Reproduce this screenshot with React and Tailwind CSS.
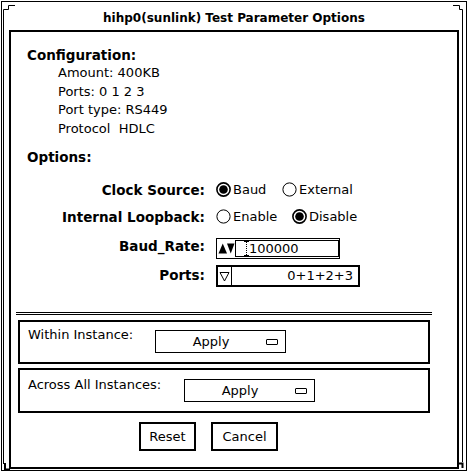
import React from 'react';

function Radio({ on }) {
  return (
    <svg width="15" height="15" viewBox="0 0 15 15" className="shrink-0">
      <circle cx="7.5" cy="7.5" r="6.6" fill="white" stroke="black" strokeWidth={on ? 1.6 : 1} />
      {on && <circle cx="7.5" cy="7.5" r="4.3" fill="black" />}
    </svg>
  );
}

function Spinner() {
  return (
    <svg width="17" height="11" viewBox="0 0 17 11" className="shrink-0">
      <polygon points="0.5,10.5 9,10.5 4.75,0.5" fill="black" />
      <polygon points="9,0.5 16.5,0.5 12.75,10.5" fill="black" />
    </svg>
  );
}

function Caret() {
  return (
    <svg width="5" height="15" viewBox="0 0 5 15" className="shrink-0">
      <path d="M0 0.5H5M0 14.5H5" stroke="black" strokeWidth="1" />
      <path d="M2.5 1V14" stroke="black" strokeWidth="1" strokeDasharray="1 1" />
    </svg>
  );
}

function MenuButton({ label }) {
  return (
    <div className="flex h-[23px] w-[131px] items-center border border-black">
      <span className="w-[110px] text-center text-[13px] leading-[16px]">{label}</span>
      <span className="h-[6px] w-[12px] rounded-[1px] border border-black" />
    </div>
  );
}

function FrameMarks() {
  // window-frame decorations (resize corners and inner rails)
  return (
    <svg
      width="468"
      height="476"
      viewBox="0 0 468 476"
      className="pointer-events-none absolute left-0 top-0"
      fill="none"
      stroke="black"
      strokeWidth="1"
    >
      <path d="M15 5.5H8.5V9.5H3.5V464" />
      <path d="M453 5.5H459.5V9.5H462.5V462" />
      <path d="M5 463V469.5H10" strokeWidth="2" />
      <path d="M458 463.5H462.5V468" strokeWidth="2" />
    </svg>
  );
}

export default function App() {
  return (
    <div className="relative h-[476px] w-[468px] overflow-hidden bg-white font-['DejaVu_Sans',sans-serif] text-black">
      <div className="ml-[1px] mt-[1px] h-[470px] w-[466px] border border-black">
        <div className="h-[28px] pt-[9px] text-center text-[12px] font-bold leading-[14px]">
          hihp0(sunlink) Test Parameter Options
        </div>

        <div className="ml-[7px] h-[439px] w-[450px] border-2 border-black">
          <div className="mt-[14px] pl-[16px]">
            <div className="text-[13.5px] font-bold leading-[18px]">Configuration:</div>
            <div className="pl-[31px] text-[13px] leading-[18.5px]">
              <div>Amount: 400KB</div>
              <div>Ports: 0 1 2 3</div>
              <div>Port type: RS449</div>
              <div>Protocol&nbsp; HDLC</div>
            </div>
            <div className="mt-[10px] text-[13.5px] font-bold leading-[18px]">Options:</div>
          </div>

          <div className="mt-[13px] flex h-[21px] items-center">
            <div className="w-[194px] text-right text-[13.5px] font-bold leading-[18px]">Clock Source:</div>
            <div className="ml-[11px] flex items-center text-[13px]">
              <Radio on />
              <span className="ml-[2px] w-[49px]">Baud</span>
              <Radio />
              <span className="ml-[2px]">External</span>
            </div>
          </div>

          <div className="mt-[6px] flex h-[21px] items-center">
            <div className="w-[194px] text-right text-[13.5px] font-bold leading-[18px]">Internal Loopback:</div>
            <div className="ml-[11px] flex items-center text-[13px]">
              <Radio />
              <span className="ml-[2px] w-[59px]">Enable</span>
              <Radio on />
              <span className="ml-[2px]">Disable</span>
            </div>
          </div>

          <div className="mt-[11px] flex h-[21px] items-center">
            <div className="mb-[5px] w-[194px] text-right text-[13.5px] font-bold leading-[18px]">Baud_Rate:</div>
            <div className="ml-[11px] flex h-[21px] w-[124px] items-center border border-black pl-[1px]">
              <Spinner />
              <div className="flex h-[17px] w-[104px] items-center border border-black pl-[8px]">
                <Caret />
                <span className="text-[13px] leading-[15px]">100000</span>
              </div>
            </div>
          </div>

          <div className="mt-[6px] flex h-[22px] items-center">
            <div className="mb-[3px] w-[194px] text-right text-[13.5px] font-bold leading-[18px]">Ports:</div>
            <div className="ml-[11px] flex h-[22px] w-[144px] items-stretch border-2 border-black">
              <div className="flex w-[14px] items-center justify-center border-r border-black">
                <svg width="11" height="11" viewBox="0 0 11 11">
                  <polygon points="1,1.5 10,1.5 5.5,10" fill="white" stroke="black" strokeWidth="1" />
                </svg>
              </div>
              <div className="flex flex-1 items-center justify-end pr-[5px] text-[13px]">0+1+2+3</div>
            </div>
          </div>

          <div className="ml-[5px] mt-[25px] h-[3px] w-[416px] border-y border-black" />

          <div className="ml-[7px] mt-[5px] flex h-[44px] w-[412px] items-start border-2 border-black pl-[8px]">
            <span className="mt-[4px] w-[127px] text-[13px] leading-[18px]">Within Instance:</span>
            <div className="mt-[8px]">
              <MenuButton label="Apply" />
            </div>
          </div>

          <div className="ml-[7px] mt-[4px] flex h-[45px] w-[412px] items-start border-2 border-black pl-[8px]">
            <span className="mt-[6px] w-[156px] text-[13px] leading-[18px]">Across All Instances:</span>
            <div className="mt-[9px]">
              <MenuButton label="Apply" />
            </div>
          </div>

          <div className="ml-[128px] mt-[9px] flex gap-[15px] text-[13px]">
            <div className="flex h-[29px] w-[57px] items-center justify-center border-2 border-black">Reset</div>
            <div className="flex h-[29px] w-[67px] items-center justify-center border-2 border-black">Cancel</div>
          </div>
        </div>
      </div>
      <FrameMarks />
    </div>
  );
}
